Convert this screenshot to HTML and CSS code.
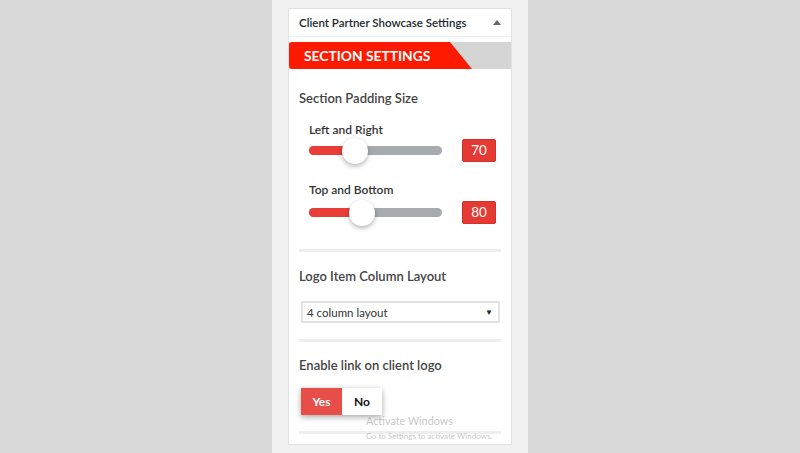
FILE: index.html
```html
<!DOCTYPE html>
<html>
<head>
<meta charset="utf-8">
<link rel="stylesheet" href="styles.css">
</head>
<body>
<div class="column">
  <div class="card">
    <div class="card-head">
      <span class="card-title">Client Partner Showcase Settings</span>
      <span class="caret"></span>
    </div>
    <div class="band">
      <div class="band-red">SECTION SETTINGS</div>
    </div>
    <div class="card-body">
      <div class="title t1">Section Padding Size</div>
      <div class="sub">
        <div class="label l1">Left and Right</div>
        <div class="slider-row r1">
          <div class="track">
            <div class="fill" style="width:46px"></div>
            <div class="thumb" style="left:33px"></div>
          </div>
          <div class="num">70</div>
        </div>
        <div class="label l2">Top and Bottom</div>
        <div class="slider-row r2">
          <div class="track">
            <div class="fill" style="width:53px"></div>
            <div class="thumb" style="left:40px"></div>
          </div>
          <div class="num">80</div>
        </div>
      </div>
      <div class="sep s1"></div>
      <div class="title t2">Logo Item Column Layout</div>
      <div class="select">
        <span>4 column layout</span>
        <span class="arrow">▼</span>
      </div>
      <div class="sep s2"></div>
      <div class="title t3">Enable link on client logo</div>
      <div class="toggle">
        <div class="opt yes">Yes</div>
        <div class="opt no">No</div>
      </div>
      <div class="sep s3"></div>
    </div>
  </div>
</div>
<div class="watermark">
  <div class="wm1">Activate Windows</div>
  <div class="wm2">Go to Settings to activate Windows.</div>
</div>
</body>
</html>
```
FILE: styles.css
```css
* { box-sizing: border-box; }
html, body { margin: 0; padding: 0; }
body {
  background: #d9d9d9;
  height: 453px;
  overflow: hidden;
  display: flex;
  justify-content: center;
  font-family: "Segoe UI", "Lato", "Open Sans", sans-serif;
  position: relative;
}
.column {
  width: 256px;
  height: 453px;
  background: #f1f1f1;
  padding: 8px 16px 0;
}
.card {
  background: #fff;
  border: 1px solid #e2e2e2;
  padding-bottom: 10px;
}
.card-head {
  height: 28px;
  border-bottom: 1px solid #eeeeee;
  display: flex;
  align-items: center;
  justify-content: space-between;
  padding: 0 10px 0 10px;
}
.card-title {
  font-size: 11.5px;
  font-weight: 600;
  color: #23282d;
}
.caret {
  width: 0; height: 0;
  border-left: 4px solid transparent;
  border-right: 4px solid transparent;
  border-bottom: 5px solid #666;
}
.band {
  margin-top: 5px;
  height: 27px;
  background: #d5d5d5;
}
.band-red {
  width: 183px;
  height: 27px;
  background: #fe1a00;
  clip-path: polygon(0 0, 161px 0, 100% 100%, 0 100%);
  border-radius: 3px 0 0 3px;
  color: #fff;
  font-size: 13.8px;
  font-weight: 700;
  line-height: 27px;
  padding-left: 15px;
}
.card-body { padding: 0 10px; }
.title {
  font-size: 13px;
  font-weight: 600;
  color: #444;
  line-height: 20px;
}
.t1 { margin-top: 19px; }
.t2 { margin-top: 14px; }
.t3 { margin-top: 13px; }
.sub { padding-left: 10px; }
.label {
  font-size: 12px;
  font-weight: 600;
  color: #333;
  line-height: 16px;
}
.l1 { margin-top: 14px; }
.l2 { margin-top: 20px; }
.slider-row {
  display: flex;
  align-items: center;
  gap: 20px;
  height: 23px;
}
.r1 { margin-top: 1px; }
.r2 { margin-top: 3px; }
.track {
  position: relative;
  width: 133px;
  height: 9px;
  border-radius: 5px;
  background: #a7aaaf;
}
.fill {
  height: 9px;
  border-radius: 5px 0 0 5px;
  background: #ea3d37;
}
.thumb {
  position: absolute;
  top: -8px;
  width: 26px;
  height: 26px;
  border-radius: 50%;
  background: #fff;
  box-shadow: 0 2px 5px rgba(0,0,0,0.3);
}
.num {
  width: 34px;
  height: 23px;
  background: #e53a33;
  border: 1px solid #d23029;
  border-radius: 2px;
  color: #fff;
  font-size: 13.5px;
  line-height: 21px;
  text-align: center;
}
.sep {
  height: 3px;
  background: #eeeeee;
}
.s1 { margin-top: 25px; }
.s2 { margin-top: 16px; }
.s3 { margin-top: 16px; }
.select {
  margin: 15px 1px 0 2px;
  height: 22px;
  border: 2px solid #e2e2e2;
  display: flex;
  align-items: center;
  justify-content: space-between;
  padding: 0 5px 0 4px;
  font-size: 11.5px;
  color: #333;
}
.arrow { font-size: 8px; color: #222; }
.toggle {
  margin: 13px 0 0 2px;
  display: flex;
  width: 81px;
  height: 27px;
  box-shadow: 0 2px 6px rgba(0,0,0,0.35);
}
.opt {
  width: 41px;
  display: flex;
  align-items: center;
  justify-content: center;
  font-size: 12px;
  font-weight: 700;
}
.yes { background: #e84e48; color: #fff; }
.no { width: 40px; background: #fff; color: #111; }
.watermark {
  position: absolute;
  left: 366px;
  top: 413px;
  color: rgba(120,120,120,0.45);
  pointer-events: none;
}
.wm1 { font-size: 10.8px; line-height: 15px; }
.wm2 { font-size: 8px; line-height: 12px; margin-top: 2px; }
```
